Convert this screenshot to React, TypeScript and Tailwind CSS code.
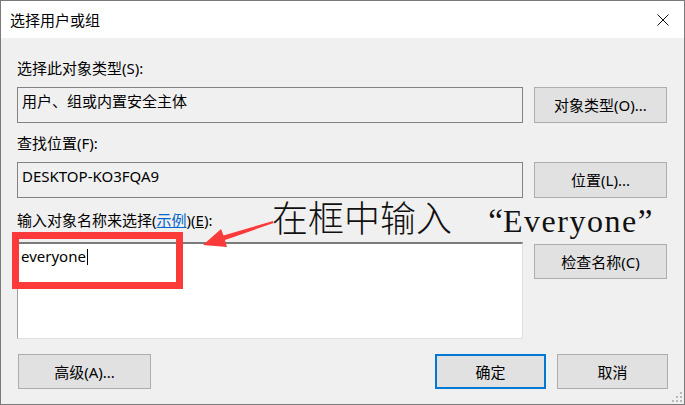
import React from 'react'

const ui = { fontFamily: '"Noto Sans", "Noto Sans CJK SC", sans-serif' }

const Btn: React.FC<{ label: React.ReactNode; className?: string }> = ({ label, className }) => (
  <div
    className={`flex items-center justify-center bg-[#e1e1e1] text-[15px] leading-[20px] text-black ${className ?? ''}`}
  >
    {label}
  </div>
)

const Field: React.FC<{ value: string }> = ({ value }) => (
  <div className="h-[36px] w-[506px] border border-[#838383] bg-[#f0f0f0] pl-[4px] pt-[3px] text-[15px] leading-[20px] text-black">
    {value}
  </div>
)

export default function App() {
  return (
    <div
      className="relative h-[405px] w-[685px] overflow-hidden border border-[#7a7a7a] bg-[#f0f0f0] text-black"
      style={ui}
    >
      {/* title bar */}
      <div className="flex h-[37px] items-center justify-between bg-white pl-[9px] pr-[15px]">
        <span className="text-[15px] leading-[20px]">选择用户或组</span>
        <svg width="12" height="12" viewBox="0 0 12 12" className="mt-[1px]">
          <path d="M0.5 0.5 L11.5 11.5 M11.5 0.5 L0.5 11.5" stroke="#111" strokeWidth="1" fill="none" />
        </svg>
      </div>

      <div className="flex flex-col px-4 pt-[20px]">
        <div className="text-[15px] leading-[20px]">选择此对象类型(S):</div>
        <div className="mt-[9px] flex gap-[11px]">
          <Field value="用户、组或内置安全主体" />
          <Btn label="对象类型(O)..." className="h-[36px] w-[133px] border border-[#adadad]" />
        </div>

        <div className="mt-[10px] text-[15px] leading-[20px]">查找位置(F):</div>
        <div className="mt-[9px] flex gap-[11px]">
          <Field value="DESKTOP-KO3FQA9" />
          <Btn label="位置(L)..." className="h-[36px] w-[133px] border border-[#adadad]" />
        </div>

        <div className="mt-[12px] text-[15px] leading-[20px]">
          输入对象名称来选择(<span className="text-[#0066cc] underline">示例</span>)(
          <span className="underline">E</span>):
        </div>
        <div className="mt-[12px] flex items-start gap-[11px]">
          <div className="h-[97px] w-[506px] border-t-2 border-l border-r border-b border-t-[#7a7a7a] border-l-[#a0a0a0] border-r-[#dedede] border-b-[#dedede] bg-white pl-[3px] pt-[2px] text-[15px] leading-[20px]">
            everyone
            <span className="ml-[1px] inline-block h-[16px] w-px translate-y-[3px] bg-black" />
          </div>
          <Btn label="检查名称(C)" className="mt-[2px] h-[35px] w-[133px] border border-[#adadad]" />
        </div>

        <div className="mt-[15px] flex gap-[11px]">
          <Btn label="高级(A)..." className="ml-px h-[35px] w-[133px] border border-[#adadad]" />
          <Btn label="确定" className="ml-auto h-[35px] w-[111px] border-2 border-[#0078d7]" />
          <Btn label="取消" className="h-[35px] w-[111px] border border-[#adadad]" />
        </div>
      </div>

      {/* size grip */}
      <svg width="12" height="12" viewBox="0 0 12 12" className="absolute bottom-[1px] right-[1px]">
        <rect x="9" y="1" width="2" height="2" fill="#b9b9b9" />
        <rect x="5" y="5" width="2" height="2" fill="#b9b9b9" />
        <rect x="9" y="5" width="2" height="2" fill="#b9b9b9" />
        <rect x="1" y="9" width="2" height="2" fill="#b9b9b9" />
        <rect x="5" y="9" width="2" height="2" fill="#b9b9b9" />
        <rect x="9" y="9" width="2" height="2" fill="#b9b9b9" />
      </svg>

      {/* annotation: red box, arrow, caption */}
      <div className="absolute left-[11px] top-[231px] h-[57px] w-[171px] border-[7px] border-[#fc3a3a]" />
      <svg
        width="685"
        height="405"
        viewBox="0 0 685 405"
        className="pointer-events-none absolute left-[-1px] top-[-1px]"
      >
        <polygon
          points="203,245 221,229 223.5,235.5 273,221 273.5,223 225,240 227,247"
          fill="#fc3a3a"
        />
      </svg>
      <div
        className="absolute left-[271px] top-[198px] whitespace-nowrap text-[36px] font-light leading-[42px] text-[#111]"
        style={{ fontFamily: '"Liberation Serif", "Noto Sans CJK SC", serif' }}
      >
        在框中输入<span className="inline-block w-[51px] text-right text-[33px]">“</span>
        <span className="text-[32px] tracking-[1.5px]">Everyone</span>
        <span className="inline-block w-[1em] text-left text-[33px]">”</span>
      </div>
    </div>
  )
}
